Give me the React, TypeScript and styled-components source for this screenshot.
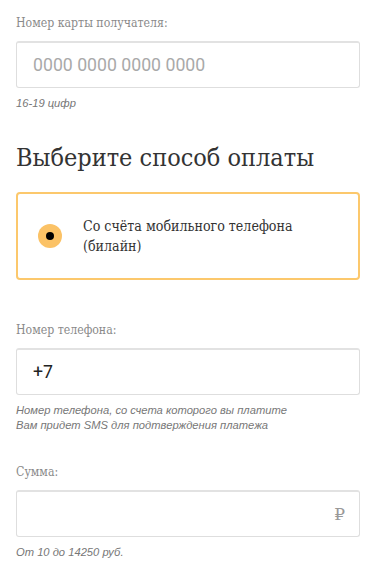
import React from 'react';
import styled, { createGlobalStyle } from 'styled-components';

const GlobalStyle = createGlobalStyle`
  html, body {
    margin: 0;
    padding: 0;
    background: #fff;
  }
  * { box-sizing: border-box; }
`;

const serif = `"DejaVu Serif", "Liberation Serif", serif`;
const sans = `Roboto, "Liberation Sans", Arial, sans-serif`;

const Page = styled.div`
  width: 374px;
  padding: 15px 14px 0 16px;
  display: flex;
  flex-direction: column;
`;

const Field = styled.div<{ $top?: number }>`
  display: flex;
  flex-direction: column;
  margin-top: ${(p) => p.$top ?? 0}px;
`;

const Label = styled.label`
  font-family: ${serif};
  font-stretch: condensed;
  font-size: 12.2px;
  color: #8a8a8a;
  line-height: 16px;
  margin-bottom: 10px;
`;

const InputBox = styled.div`
  height: 47px;
  border: 1px solid #dedede;
  border-top: 2px solid #e2e2e2;
  border-radius: 3px;
  display: flex;
  align-items: center;
  padding: 0 14px 0 16px;
`;

const Value = styled.span<{ $muted?: boolean }>`
  flex: 1;
  font-family: ${sans};
  font-size: 17.7px;
  color: ${(p) => (p.$muted ? '#a9a9a9' : '#222')};
`;

const Ruble = styled.span`
  font-family: ${serif};
  font-size: 17px;
  color: #999;
`;

const Hint = styled.div`
  font-family: "Liberation Sans", Arial, sans-serif;
  font-style: italic;
  font-size: 11.2px;
  line-height: 15px;
  color: #777;
  margin-top: 8px;
`;

const Heading = styled.h2`
  font-family: ${serif};
  font-stretch: condensed;
  font-weight: normal;
  font-size: 25px;
  color: #333;
  margin: 31px 0 0;
  line-height: 32px;
`;

const Option = styled.div`
  margin-top: 18px;
  height: 88px;
  border: 2px solid #fcc86c;
  border-radius: 4px;
  display: flex;
  align-items: center;
  padding-left: 20px;
  gap: 21px;
`;

const Radio = styled.span`
  width: 24px;
  height: 24px;
  border-radius: 50%;
  background: #fbc266;
  display: flex;
  align-items: center;
  justify-content: center;
  flex-shrink: 0;
  &::after {
    content: '';
    width: 8px;
    height: 8px;
    border-radius: 50%;
    background: #000;
  }
`;

const OptionText = styled.div`
  font-family: ${serif};
  font-stretch: condensed;
  font-size: 14.1px;
  line-height: 20px;
  color: #333;
`;

export default function App() {
  return (
    <>
      <GlobalStyle />
      <Page>
        <Field>
          <Label>Номер карты получателя:</Label>
          <InputBox>
            <Value $muted>0000 0000 0000 0000</Value>
          </InputBox>
          <Hint>16-19 цифр</Hint>
        </Field>

        <Heading>Выберите способ оплаты</Heading>

        <Option>
          <Radio />
          <OptionText>
            Со счёта мобильного телефона
            <br />
            (билайн)
          </OptionText>
        </Option>

        <Field $top={42}>
          <Label>Номер телефона:</Label>
          <InputBox>
            <Value>+7</Value>
          </InputBox>
          <Hint>
            Номер телефона, со счета которого вы платите
            <br />
            Вам придет SMS для подтверждения платежа
          </Hint>
        </Field>

        <Field $top={31}>
          <Label>Сумма:</Label>
          <InputBox>
            <Value />
            <Ruble>₽</Ruble>
          </InputBox>
          <Hint>От 10 до 14250 руб.</Hint>
        </Field>
      </Page>
    </>
  );
}
